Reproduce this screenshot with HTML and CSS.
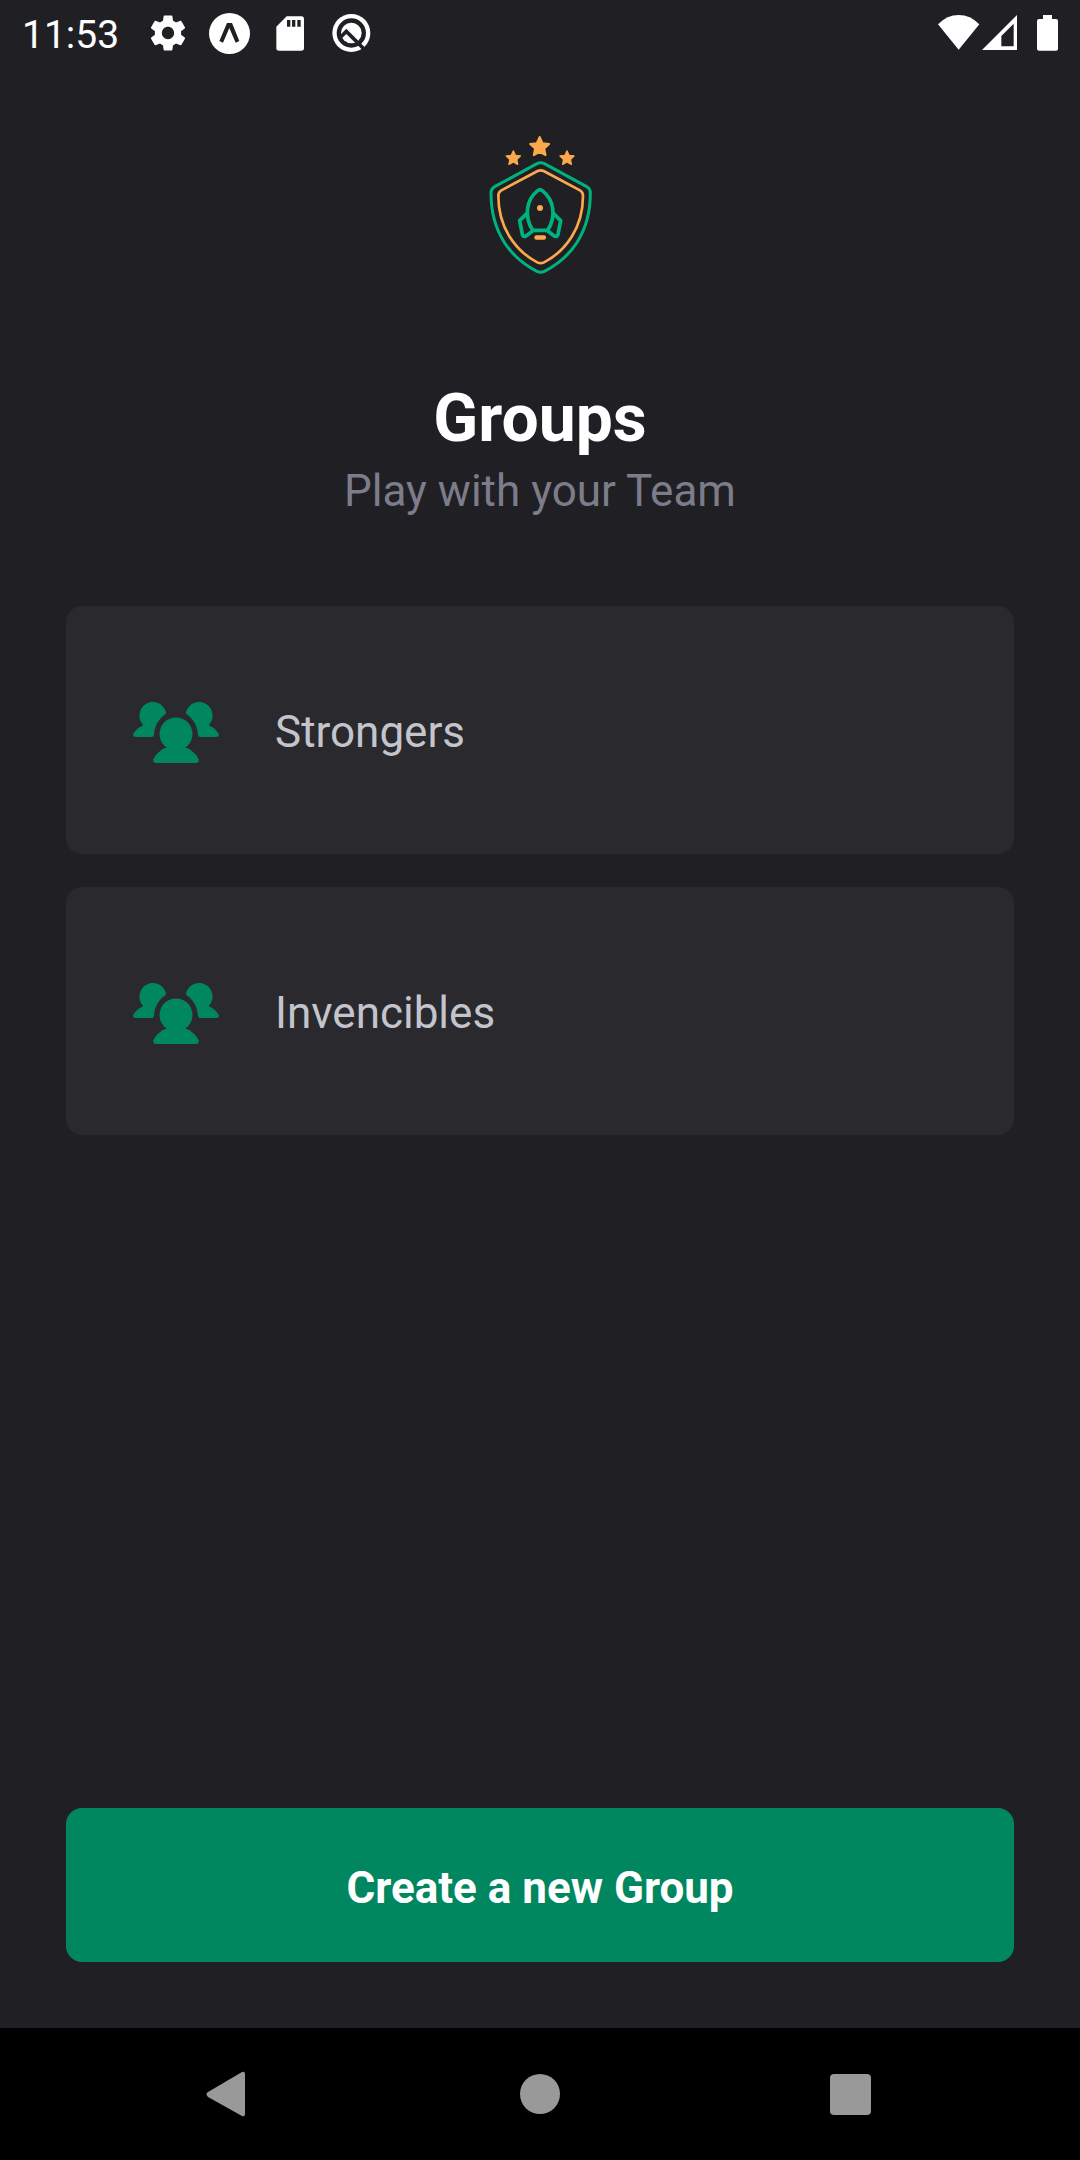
FILE: index.html
```html
<!DOCTYPE html>
<html lang="en">
<head>
<meta charset="utf-8">
<meta name="viewport" content="width=device-width, initial-scale=1">
<title>Groups</title>
<link rel="stylesheet" href="styles.css">
</head>
<body>
<svg class="sprite" aria-hidden="true">
  <symbol id="people" viewBox="36 18 264 264">
    <circle cx="168" cy="162" r="49.5"/>
    <path d="M138 203H198C214 208 230 224 236 238Q238 249 228 249H108Q98 249 100 238C106 224 122 208 138 203Z"/>
    <path id="side-person" d="M138 101C116 116 104 136 102 164Q102 171 95 171H47Q37 171 40 161C47 149 58 141 70 135A40.500 40.500 0 1 1 137 93Q138 98 138 101Z"/>
    <use href="#side-person" transform="translate(336 0) scale(-1 1)"/>
  </symbol>
  <symbol id="star" viewBox="-34 -34 68 68" overflow="visible">
    <path d="M0-30 8.500-11.600 28.500-9.300 13.700 4.400 17.600 24.300 0 14.400-17.600 24.300-13.700 4.400-28.500-9.300-8.500-11.600Z" stroke-width="6" stroke-linejoin="round"/>
  </symbol>
</svg>

<header class="status-bar">
  <time class="clock">11:53</time>
  <div class="notifications">
    <svg class="status-icon" viewBox="-1.700 -1.700 27.400 27.400"><path d="M19.430 12.980c.04-.32.07-.64.07-.98s-.03-.66-.07-.98l2.110-1.650c.19-.15.24-.42.12-.64l-2-3.460c-.12-.22-.39-.3-.61-.22l-2.490 1c-.52-.4-1.080-.73-1.690-.98l-.38-2.650C14.460 2.180 14.250 2 14 2h-4c-.25 0-.46.18-.49.42l-.38 2.650c-.61.25-1.170.59-1.690.98l-2.490-1c-.23-.09-.49 0-.61.22l-2 3.460c-.13.22-.07.49.12.64l2.110 1.650c-.04.32-.07.65-.07.98s.03.66.07.98l-2.110 1.650c-.19.15-.24.42-.12.64l2 3.460c.12.22.39.3.61.22l2.490-1c.52.4 1.080.73 1.690.98l.38 2.650c.03.24.24.42.49.42h4c.25 0 .46-.18.49-.42l.38-2.650c.61-.25 1.170-.59 1.690-.98l2.490 1c.23.09.49 0 .61-.22l2-3.460c.12-.22.07-.49-.12-.64l-2.110-1.650zM12 15.500c-1.930 0-3.500-1.570-3.500-3.500s1.570-3.500 3.500-3.500 3.500 1.570 3.500 3.500-1.570 3.500-3.500 3.500z"/></svg>
    <svg class="status-icon" viewBox="45 27 144 144"><circle cx="118.500" cy="100.500" r="61.500"/><path class="cutout" d="M111 69H126L148 123 137 128 118 84 99 128 88 123Z"/></svg>
    <svg class="status-icon" viewBox="228 27 144 144"><path d="M290 49H334Q342 49 342 57V144Q342 152 334 152H267Q259 152 259 144V80Z"/><path class="cutout" d="M291 60H301V80H291ZM306 60H316V80H306ZM322 60H332V80H322Z"/></svg>
    <svg class="status-icon" viewBox="411 27 144 144"><circle cx="484" cy="99" r="57"/><circle class="cutout" cx="484" cy="99" r="44"/><circle cx="484" cy="99" r="31"/><path class="cutout-line" d="M452 111 469 94 522 147"/></svg>
  </div>
  <div class="system">
    <svg class="wifi" viewBox="54 27 126 144"><path d="M54 73Q81 45 116 45T178 73L116 149Z"/></svg>
    <svg class="signal" viewBox="186 27 108 144"><path fill-rule="evenodd" d="M291 45V150H186ZM281 71 244 108V139H281Z"/></svg>
    <svg class="battery" viewBox="348 27 69 144"><path d="M369 45H396V57H408Q414 57 414 63V146Q414 152 408 152H357Q351 152 351 146V63Q351 57 357 57H369Z"/></svg>
  </div>
</header>

<main class="screen">
  <svg class="logo" viewBox="57 45 309 420" role="img" aria-label="Rocket shield">
    <g class="logo-stars">
      <use href="#star" x="175" y="47" width="68" height="68"/>
      <use href="#star" x="105" y="90" width="50" height="50"/>
      <use href="#star" x="266" y="90" width="50" height="50"/>
    </g>
    <path class="green-line" d="M201 131Q212 126 223 131L350 200Q361 206 361 220C361 340 300 415 223 454Q212 459 201 454C124 415 63 340 63 220Q63 206 74 200Z"/>
    <path class="orange-line" d="M203 153Q212 149 221 153L330 211Q339 216 339 228C339 320 290 392 222 427Q212 432 202 427C134 392 85 320 85 228Q85 216 94 211Z"/>
    <g class="green-line rocket">
      <path d="M188 331C162 290 168 240 203 212Q210 206 217 212C253 240 259 290 233 331Z"/>
      <path d="M173 278 149 302 157 343Q160 352 168 348L188 333M248 278 272 302 264 343Q261 352 253 348L233 333"/>
    </g>
    <g class="logo-fill"><circle cx="210" cy="264" r="9"/><rect x="193" y="346" width="35" height="13" rx="6"/></g>
  </svg>

  <div class="heading">
    <h1 class="title">Groups</h1>
    <p class="subtitle">Play with your Team</p>
  </div>

  <div class="group-list">
    <button class="group-card" type="button"><svg class="group-icon" aria-hidden="true"><use href="#people"/></svg><span class="group-name">Strongers</span></button>
    <button class="group-card" type="button"><svg class="group-icon" aria-hidden="true"><use href="#people"/></svg><span class="group-name">Invencibles</span></button>
  </div>

  <button class="create-button" type="button">Create a new Group</button>
</main>

<nav class="nav-bar" aria-label="System">
  <button class="nav-button" type="button" aria-label="Back"><svg class="nav-icon" viewBox="0 0 48 48"><path d="M3 22 37 2Q40 1 40 4V44Q40 47 37 46L3 27Q0 24 3 22Z"/></svg></button>
  <button class="nav-button" type="button" aria-label="Home"><svg class="nav-icon" viewBox="0 0 48 48"><circle cx="24" cy="24" r="20"/></svg></button>
  <button class="nav-button" type="button" aria-label="Recent apps"><svg class="nav-icon" viewBox="0 0 48 48"><rect x="3" y="4" width="41" height="41" rx="4"/></svg></button>
</nav>
</body>
</html>
```
FILE: styles.css
```css
* {
  box-sizing: border-box;
}

body {
  margin: 0;
  min-height: 100vh;
  display: flex;
  flex-direction: column;
  background: #202024;
  color: #fff;
  font-family: Roboto, sans-serif;
  font-size: 44px;
  line-height: 52px;
}

button {
  border: 0;
  font: inherit;
  cursor: pointer;
}

.sprite {
  position: absolute;
  width: 0;
  height: 0;
}

.status-bar {
  display: flex;
  align-items: center;
  height: 66px;
  padding: 0 21px 0 22px;
}

.status-bar svg {
  height: 48px;
  fill: #fff;
}

.clock {
  width: 122px;
  padding-top: 4px;
  font-size: 39px;
  line-height: 46px;
}

.notifications {
  display: flex;
  gap: 13px;
}

.status-icon {
  width: 48px;
}

.status-bar .cutout {
  fill: #202024;
}

.cutout-line {
  fill: none;
  stroke: #202024;
  stroke-width: 11px;
}

.system {
  display: flex;
  margin-left: auto;
}

.wifi {
  width: 42px;
  margin-right: 2px;
}

.signal {
  width: 36px;
  margin-right: 18px;
}

.battery {
  width: 23px;
}

.screen {
  flex: 1;
  display: flex;
  flex-direction: column;
  padding: 69px 66px 66px;
}

.logo {
  align-self: center;
  width: 103px;
  height: 140px;
}

.logo-stars,
.logo-fill {
  fill: #fba94c;
}

.logo-stars {
  stroke: #fba94c;
}

.green-line,
.orange-line {
  fill: none;
  stroke: #00b37e;
  stroke-width: 9px;
  stroke-linejoin: round;
}

.orange-line {
  stroke: #fba94c;
  stroke-width: 8px;
}

.rocket {
  stroke-width: 11px;
}

.heading {
  display: flex;
  flex-direction: column;
  gap: 8px;
  margin: 105px 0 89px;
  text-align: center;
}

.title,
.subtitle {
  margin: 0;
}

.title {
  font-size: 66px;
  line-height: 77px;
}

.subtitle {
  color: #7c7c8a;
}

.group-list {
  display: flex;
  flex-direction: column;
  gap: 33px;
  margin-bottom: 66px;
}

.group-card {
  display: flex;
  align-items: center;
  gap: 55px;
  min-height: 248px;
  padding: 66px;
  border-radius: 16px;
  background: #29292e;
  color: #c4c4cc;
  text-align: left;
}

.group-icon {
  width: 88px;
  height: 88px;
  fill: #00875f;
}

.group-name {
  padding-top: 4px;
}

.create-button {
  min-height: 154px;
  margin-top: auto;
  padding: 6px 33px 0;
  border-radius: 16px;
  background: #00875f;
  color: #fff;
  font-weight: 700;
}

.nav-bar {
  display: flex;
  justify-content: center;
  height: 132px;
  padding: 0 6%;
  background: #000;
}

.nav-button {
  flex: 1;
  max-width: 311px;
  display: flex;
  align-items: center;
  justify-content: center;
  padding: 0;
  background: none;
}

.nav-icon {
  width: 48px;
  height: 48px;
  fill: #999;
}
```
